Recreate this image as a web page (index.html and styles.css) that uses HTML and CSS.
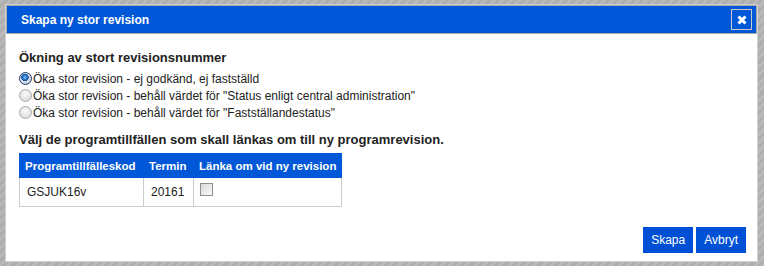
FILE: index.html
```html
<!DOCTYPE html>
<html>
<head>
  <meta charset="utf-8">
  <link rel="stylesheet" href="styles.css">
</head>
<body>
  <div class="dialog">
    <div class="titlebar">
      <span class="title">Skapa ny stor revision</span>
      <button class="close" type="button">
        <svg width="12" height="12" viewBox="0 0 12 12"><path d="M2.5 2.5 L9.5 9.5 M9.5 2.5 L2.5 9.5" stroke="#fff" stroke-width="3"/></svg>
      </button>
    </div>
    <div class="content">
      <h3>Ökning av stort revisionsnummer</h3>
      <label class="opt"><input type="radio" name="rev" checked>Öka stor revision - ej godkänd, ej fastställd</label>
      <label class="opt"><input type="radio" name="rev">Öka stor revision - behåll värdet för "Status enligt central administration"</label>
      <label class="opt"><input type="radio" name="rev">Öka stor revision - behåll värdet för "Fastställandestatus"</label>

      <h3 class="second">Välj de programtillfällen som skall länkas om till ny programrevision.</h3>
      <table class="links">
        <tr>
          <th class="c1">Programtillfälleskod</th>
          <th class="c2">Termin</th>
          <th class="c3">Länka om vid ny revision</th>
        </tr>
        <tr>
          <td>GSJUK16v</td>
          <td>20161</td>
          <td class="chk"><input type="checkbox"></td>
        </tr>
      </table>
    </div>
    <div class="buttons">
      <button type="button">Skapa</button>
      <button type="button">Avbryt</button>
    </div>
  </div>
</body>
</html>
```

FILE: styles.css
```css
body {
  margin: 0;
  padding: 4px 0 0 5px;
  height: 266px;
  box-sizing: border-box;
  font-family: "Liberation Sans", Arial, sans-serif;
  background: repeating-linear-gradient(135deg, #b9b9b9 0, #b9b9b9 3px, #aeaeae 3px, #aeaeae 6px);
  overflow: hidden;
}

.dialog {
  width: 753px;
  height: 258px;
  box-sizing: border-box;
  background: #fff;
  border: 1px solid #d0d0d0;
  display: flex;
  flex-direction: column;
}

.titlebar {
  display: flex;
  align-items: center;
  justify-content: space-between;
  height: 29px;
  box-sizing: border-box;
  background: #0058d8;
  border: 1px solid #aaa;
  padding: 0 4px 0 14px;
}

.title {
  color: #fff;
  font-weight: bold;
  font-size: 12px;
}

.close {
  width: 21px;
  height: 21px;
  padding: 0;
  background: #0058d8;
  border: 1px solid #c8c8c8;
  display: flex;
  align-items: center;
  justify-content: center;
}

.content {
  padding: 16px 13px 0 13px;
  flex: 1;
}

h3 {
  margin: 0 0 5px 0;
  font-size: 13px;
  color: #222;
}

h3.second {
  margin-top: 11px;
  margin-bottom: 6px;
}

.opt {
  display: flex;
  align-items: center;
  height: 17px;
  font-size: 12px;
  color: #222;
}

.opt input {
  appearance: none;
  margin: 0 1px 0 0;
  width: 13px;
  height: 13px;
  border-radius: 50%;
  border: 1px solid #a8a8a8;
  background: radial-gradient(circle at 50% 35%, #fafafa, #d4d4d4);
  box-sizing: border-box;
}

.opt input:checked {
  border-color: #1f3f6a;
  background: radial-gradient(circle at 45% 40%, #8ec2f0 0, #1f6fc4 2.5px, #0d4d96 3.5px, #dfe6ee 4px, #c8d0da 6px);
}

.links {
  border-collapse: collapse;
  table-layout: fixed;
  width: 323px;
  font-size: 12px;
  color: #222;
}

.links th {
  background: #0058d8;
  color: #fff;
  font-size: 11.5px;
  text-align: left;
  white-space: nowrap;
  height: 23px;
  padding: 0 5px;
  border: 1px solid #0058d8;
  border-left-color: #ddd;
}

.links th.c1 { width: 113px; border-left-color: #0058d8; }
.links th.c2 { width: 39px; }

.links td {
  border: 1px solid #ccc;
  height: 28px;
  padding: 0 7px;
}

.links td.chk {
  padding: 0 6px;
}

.chk input {
  appearance: none;
  margin: 0 0 6px 0;
  width: 13px;
  height: 13px;
  vertical-align: middle;
  border: 1px solid #8f8f8f;
  background: linear-gradient(135deg, #d8d8d8, #fbfbfb);
  box-sizing: border-box;
}

.buttons {
  display: flex;
  justify-content: flex-end;
  gap: 3px;
  padding: 0 11px 8px 0;
}

.buttons button {
  background: #0050d6;
  color: #fff;
  border: none;
  height: 26px;
  padding: 0 8px;
  font-family: "Liberation Sans", Arial, sans-serif;
  font-size: 12px;
}
```
